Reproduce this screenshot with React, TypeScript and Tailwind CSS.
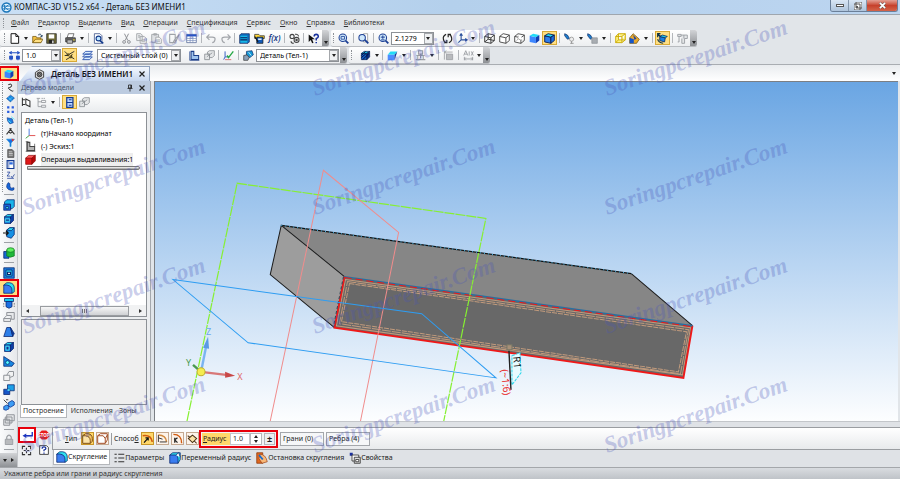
import React from 'react';
import { clsx } from 'clsx';

type GlyphName = keyof typeof glyphs;

interface ToolItem {
  kind?: 'button' | 'drop' | 'sep';
  icon?: GlyphName;
  label?: string;
  active?: boolean;
  disabled?: boolean;
  size?: 'sm' | 'lg';
}

const cube = (fill: string, top: string, side: string, stroke: string) => (
  <g stroke={stroke} strokeWidth="1" strokeLinejoin="round">
    <path d="M2 5h8v9H2z" fill={fill} />
    <path d="M2 5l4-3h8l-4 3z" fill={top} />
    <path d="M10 5l4-3v8l-4 4z" fill={side} />
  </g>
);

const block = (hole: string) => (
  <>
    {cube('#1687e0', '#28d8f4', '#0b3ea8', '#08246e')}
    <path d={hole} fill="#0d2f96" stroke="#5ff" strokeWidth="1" />
  </>
);

const glyphs = {
  logo: (
    <g fill="none" stroke="#1673b8" strokeWidth="2">
      <circle cx="8" cy="8" r="6.5" fill="#e8f6ff" />
      <path d="M5 4v8M11 4L6 8l5 4M3 6h10M3 10h10" strokeWidth="1.3" />
    </g>
  ),
  file: <path d="M3 1h7l4 4v10H3zM10 1v4h4" fill="#fff" stroke="#111" strokeWidth="1.4" />,
  open: (
    <g stroke="#6b4a00">
      <path d="M1 14V5h5l1 2h6v7z" fill="#f5c443" />
      <path d="M1 14l4-5h11l-3 5z" fill="#ffe083" />
      <path d="M9 3c3-3 5 0 5 2M12 4l2 2 1-3" fill="none" stroke="#135" strokeWidth="1.3" />
    </g>
  ),
  save: (
    <>
      <path d="M1 1h14v14H1z" fill="#6f6a35" stroke="#222" />
      <path d="M4 2h8v6H4z" fill="#fff" />
      <path d="M4 10h8v5H4z" fill="#222" />
      <path d="M9 11h2v4H9z" fill="#eee" />
    </>
  ),
  print: (
    <>
      <path d="M5 1h8l-2 6H3z" fill="#fff" stroke="#444" />
      <path d="M1 7h14v6H1z" fill="#6e6e6e" stroke="#222" />
      <path d="M3 10h8v5H3z" fill="#bbb" stroke="#333" />
      <path d="M12 9h2v2h-2z" fill="#e8d21a" />
    </>
  ),
  preview: (
    <>
      <path d="M2 1h8l3 3v11H2z" fill="#fff" stroke="#213a78" />
      <circle cx="8" cy="8" r="3.5" fill="#bfe6ff" stroke="#123a8c" strokeWidth="1.6" />
      <path d="M10 11l5 4" stroke="#123a8c" strokeWidth="2.2" />
    </>
  ),
  cut: (
    <g fill="none" stroke="#8d8f94" strokeWidth="1.4">
      <path d="M5 1l5 10M11 1L6 11" />
      <circle cx="4.5" cy="13" r="2" />
      <circle cx="11.5" cy="13" r="2" />
    </g>
  ),
  copy: (
    <g fill="#eef0f2" stroke="#a3a6aa" strokeWidth="1.3">
      <path d="M1 1h6l2 2v8H1zM6 5h6l3 3v7H6z" />
      <path d="M3 4h3M3 6h3M8 10h5M8 12h5" />
    </g>
  ),
  paste: (
    <g fill="#dfe1e4" stroke="#a3a6aa" strokeWidth="1.3">
      <path d="M1 2h10v12H1zM4 1h4v2H4z" />
      <path d="M7 6h5l3 3v6H7z" fill="#f5f6f7" />
      <path d="M9 10h4M9 12h4" />
    </g>
  ),
  brush: (
    <g fill="none" stroke="#9ea2a8" strokeWidth="1.5">
      <path d="M1 2h8v12H1zM15 2L8 10l-2 4 4-2z" />
    </g>
  ),
  table: (
    <>
      <path d="M1 2h14v12H1z" fill="#fff" stroke="#445a8e" />
      <path d="M1 2h14v3H1z" fill="#2354c8" />
      <path d="M1 8h14M1 11h14M6 5v9M10 5v9" stroke="#7b8fbc" />
    </>
  ),
  undo: <path d="M5 2L1 6l4 4M1 6h8q5 0 4 4t-4 4" fill="none" stroke="#a3a6ab" strokeWidth="1.8" />,
  redo: <path d="M11 2l4 4-4 4M15 6H7Q2 6 3 10t4 4" fill="none" stroke="#a3a6ab" strokeWidth="1.8" />,
  manager: (
    <>
      <path d="M1 3l2-2h12v12l-2 2H1z" fill="#0f6fc0" stroke="#0a1e5c" />
      <path d="M2 4h10v10H2z" fill="#17b7e6" />
      <path d="M2 7h10M2 10h10" stroke="#0a1e5c" strokeWidth="1.5" />
    </>
  ),
  library: (
    <>
      <path d="M1 2h6l2 2h6v4H1z" fill="#ffd83a" stroke="#222" />
      <path d="M4 6h9v9H4z" fill="#135bb8" stroke="#111" />
      <path d="M6 8h5v2H6z" fill="#fff" />
      <path d="M1 5l5 8" stroke="#111" strokeWidth="1.6" />
    </>
  ),
  gears: (
    <g fill="none" stroke="#444" strokeWidth="1.6">
      <circle cx="4.5" cy="5" r="3" />
      <circle cx="11" cy="10" r="3.6" />
      <circle cx="11" cy="10" r="1" />
      <path d="M3 12q0 3 4 3M9 2q4-1 5 3" />
    </g>
  ),
  help: (
    <>
      <path d="M1 2v11l3-3 2 5 2-1-2-5h4z" fill="#111" />
      <path d="M9 5q0-3 3-3t3 3q0 2-3 3v3M12 13v2" fill="none" stroke="#17309c" strokeWidth="2.2" />
    </>
  ),
  zoomBox: (
    <g fill="none" stroke="#1c3f94">
      <circle cx="7" cy="7" r="5.5" fill="#cfe8fb" strokeWidth="1.5" />
      <path d="M4.5 5h5v4h-5z" strokeWidth="1.2" />
      <path d="M11 11l4 4" strokeWidth="2.6" />
    </g>
  ),
  zoomPage: (
    <g fill="none" stroke="#1c3f94">
      <path d="M8 1h6v12H8z" stroke="#888" fill="#fff" />
      <circle cx="6" cy="7" r="4.7" fill="#cfe8fb" strokeWidth="1.5" />
      <path d="M10 10l5 5" strokeWidth="2.6" />
    </g>
  ),
  zoomIn: (
    <g fill="none" stroke="#1c3f94">
      <circle cx="7" cy="7" r="5.5" fill="#cfe8fb" strokeWidth="1.5" />
      <path d="M4 6h6M7 3.5v5M4.5 10h5" strokeWidth="1.4" />
      <path d="M11 11l4 4" strokeWidth="2.6" />
    </g>
  ),
  refresh: (
    <g fill="none" stroke="#222" strokeWidth="1.7">
      <path d="M6 2Q1 4 2 9t4 5M3 14h4v-4M10 14q5-2 4-7t-4-5M13 2H9v4" />
    </g>
  ),
  axes: (
    <g fill="none" stroke="#2a4f9c" strokeWidth="1.6">
      <path d="M6 2v8l-4 4M6 10h8M4 4l2-3 2 3M12 8l3 2-3 2" />
    </g>
  ),
  wire: (
    <g fill="none" stroke="#222" strokeWidth="1.2">
      <path d="M1 5l5-4 9 2v8l-5 4-9-2zM1 5l9 2v8M10 7l5-4M6 1v8l9 2M6 9l-5 4" />
    </g>
  ),
  hidden: (
    <g fill="#fff" stroke="#333" strokeWidth="1.2">
      <path d="M1 5l5-4 9 2v8l-5 4-9-2zM1 5l9 2v8M10 7l5-4" />
    </g>
  ),
  thin: (
    <g fill="#fff" stroke="#333" strokeWidth="1.2">
      <path d="M1 5l5-4 9 2v8l-5 4-9-2zM1 5l9 2v8M10 7l5-4" />
      <path d="M6 1v8l9 2M6 9l-5 4" stroke="#999" strokeDasharray="2 1" />
    </g>
  ),
  solid: (
    <>
      <path d="M1 4l9 2v9l-9-2z" fill="#3c86ff" />
      <path d="M1 4l5-3 9 2-5 3z" fill="#22dcf7" />
      <path d="M10 6l5-3v8l-5 4z" fill="#103fb4" />
    </>
  ),
  solidEdge: (
    <g stroke="#0a1a50" strokeWidth="1.3">
      <path d="M1 4l9 2v9l-9-2z" fill="#2f7dea" />
      <path d="M1 4l5-3 9 2-5 3z" fill="#22dcf7" />
      <path d="M10 6l5-3v8l-5 4z" fill="#1b6fe0" />
    </g>
  ),
  lamp: (
    <>
      <path d="M1 1l4 2 3 5-3 1-4-5z" fill="#1c7fd0" stroke="#0a2a66" />
      <circle cx="11" cy="9" r="3" fill="#eee" stroke="#888" />
      <path d="M11 12v3M9 15h5" stroke="#777" />
    </>
  ),
  lampGray: (
    <>
      <path d="M1 1l4 2 3 5-3 1-4-5z" fill="#1c7fd0" stroke="#0a2a66" />
      <path d="M7 7h8v8H7z" fill="#a9adb2" stroke="#8b8f94" />
    </>
  ),
  yellowCube: (
    <g fill="#fff27a" stroke="#c9a800" strokeWidth="1.3">
      <path d="M1 5h9v9H1zM1 5l4-4h10l-5 4M15 1v9l-5 4M5 1v9h10M5 10l-4 4" />
    </g>
  ),
  section: (
    <>
      <path d="M1 15V7l5-6 9 8-4 6z" fill="#e9a92c" stroke="#6b4a00" />
      <path d="M1 15V7l6 2v6z" fill="#1656c8" />
      <path d="M6 3l5 5-3 2z" fill="#2244a0" />
    </>
  ),
  orient: (
    <>
      <path d="M4 5l8 2-1 6-7-2z" fill="#1c7fe0" stroke="#0a2a66" strokeWidth="1.2" />
      <path d="M4 5l4-2 7 2-3 2z" fill="#22dcf7" stroke="#0a2a66" strokeWidth="1.2" />
      <path d="M1 6V1h4M2 2l3 3" fill="none" stroke="#134" strokeWidth="1.8" />
      <path d="M1 9q1 5 8 6" fill="none" stroke="#134" strokeWidth="1.6" />
    </>
  ),
  panelGray: (
    <g fill="#e4e6e8" stroke="#9a9da2" strokeWidth="1.3">
      <path d="M1 2h5v3H1zM3 5v8H1M6 3h9v5h-4v7H7V8M10 3v5" />
    </g>
  ),
  treeGray: (
    <g fill="none" stroke="#9a9da2" strokeWidth="1.3">
      <path d="M1 2h5M3 2v12h5M3 7h5M8 5h6v3H8zM8 12h6v3H8z" />
      <path d="M8 2h6" strokeDasharray="2 1" />
    </g>
  ),
  step: (
    <g stroke="#2350c4" strokeWidth="1.5" fill="none">
      <path d="M1 4h14M4 2L1 4l3 2M12 2l3 2-3 2M3 8v7M13 8v7" />
      <path d="M1 9h4v4H1zM11 9h4v4h-4z" fill="#2350c4" />
    </g>
  ),
  snap: (
    <g fill="none" stroke="#222" strokeWidth="1.3">
      <path d="M1 2l5 5 9-5M1 8h5M3 14l7-4 5 3M12 6l-2 4" />
      <circle cx="6" cy="7" r="1.5" fill="#e0b000" />
      <circle cx="10" cy="10" r="1.5" fill="#e0b000" />
    </g>
  ),
  layers: (
    <g stroke="#1f49a8" strokeWidth="1.2" fill="#d9ecff">
      <path d="M1 14l4-4h10l-4 4zM1 10l4-4h10l-4 4zM1 6l4-4h10l-4 4z" />
    </g>
  ),
  sketch: (
    <>
      <path d="M3 2h4v6h7v6H3z" fill="#9fc4ee" stroke="#1b3d87" strokeWidth="1.5" />
      <path d="M1 2v13M1 15h14" stroke="#1b3d87" />
    </>
  ),
  sketchGray: (
    <>
      <path d="M3 2h4v6h7v6H3z" fill="#b5b5b5" stroke="#444" strokeWidth="1.5" />
      <path d="M1 1h4M1 15h14M3 1v14M14 8V4" stroke="#444" />
    </>
  ),
  boxes: (
    <g fill="#e4e6e8" stroke="#8b8f94" strokeWidth="1.2">
      <path d="M1 6h7v8H1zM5 3l3-2h7v7l-3 3H8V6H5z" />
      <path d="M4 10l8-6" />
    </g>
  ),
  check: (
    <>
      <path d="M3 2v8l-2 4M3 10h6" fill="none" stroke="#345dc4" strokeWidth="1.4" />
      <path d="M6 8l2 3 7-9" fill="none" stroke="#27a845" strokeWidth="2" />
      <path d="M3 14h9" stroke="#d04040" />
    </>
  ),
  parts: (
    <>
      <path d="M5 2l8-1 2 6-5 4-5-3z" fill="#159ad8" stroke="#0a2a66" />
      <path d="M1 8l5-1 3 4-2 4H1z" fill="#8aa0b8" stroke="#333" />
      <path d="M8 3l4 5" stroke="#fff" />
    </>
  ),
  hatch: (
    <>
      {cube('#135fc4', '#19c8ee', '#0b2f86', '#031a50')}
      <path d="M2 11l7-6M4 14l9-9M2 8l6-6" stroke="#031040" strokeWidth="1.4" />
    </>
  ),
  wedge: (
    <>
      <path d="M1 7l4-5h10l-4 5z" fill="#22dcf7" />
      <path d="M1 7h10v8H1z" fill="#4d8dff" />
      <path d="M11 7l4-5-4 13z" fill="#123a9f" />
    </>
  ),
  viseGray: (
    <g fill="none" stroke="#9b9ea3" strokeWidth="1.5">
      <path d="M5 1h6v5H5zM2 8h12M4 8v5M12 8v5M1 14h14M8 6v6" />
    </g>
  ),
  dimGray: (
    <g fill="#b8babd" stroke="#9b9ea3" strokeWidth="1.2">
      <path d="M5 6h9v8H5z" />
      <path d="M2 2v12M2 3h12M5 1L2 3l3 2" fill="none" />
    </g>
  ),
  dimAuto: (
    <g fill="none" stroke="#9b9ea3" strokeWidth="1.3">
      <path d="M1 8l3-7 3 7M2 6h4M9 2v6M12 2l3 6M15 2l-3 6M2 10v5M14 10v5M2 13h12M4 11l-2 2 2 2M12 11l2 2-2 2" />
    </g>
  ),
  spline: <path d="M4 3q6-3 6 1T6 8t1 4 6 2" fill="none" stroke="#222" strokeWidth="1.7" />,
  surface: (
    <>
      <path d="M1 8l7-6 7 5-7 7z" fill="#178be0" stroke="#0b3a94" />
      <path d="M4 6l7 6M5 11l7-6" stroke="#6cf" />
    </>
  ),
  array: (
    <g fill="#2a5ee0">
      <path d="M2 2h4v4H2zM10 2h4v4h-4zM2 10h4v4H2zM10 10h4v4h-4z" />
    </g>
  ),
  aux: (
    <>
      <path d="M2 3l9 2 2 7-6 2-4-5z" fill="#1c7fe0" stroke="#0a2f8a" />
      <path d="M9 1l6 5M4 8l5 4" stroke="#5ef" strokeWidth="1.5" />
    </>
  ),
  measure: (
    <g fill="none" stroke="#333" strokeWidth="1.9">
      <path d="M1 13l7-9 7 9M5 9l3 2 3-2" />
      <path d="M6 3h4" />
    </g>
  ),
  filter: (
    <>
      <path d="M1 2h14L9 9v6H7V9z" fill="#1a6fe0" stroke="#0f8fd8" />
      <path d="M10 1l5 2-4 3z" fill="#e03030" />
    </>
  ),
  spec: (
    <>
      <path d="M3 1h8l3 3v11H3z" fill="#777" stroke="#333" />
      <path d="M5 5h6M5 8h7M5 11h7" stroke="#ddd" strokeWidth="1.3" />
    </>
  ),
  report: (
    <>
      <path d="M2 1h12v14H2z" fill="#fff" stroke="#123a94" strokeWidth="2" />
      <path d="M6 4h6v4H6z" fill="#2b6be0" />
      <path d="M5 1v14" stroke="#123a94" />
    </>
  ),
  marks: (
    <g fill="none" stroke="#1e3f9a" strokeWidth="1.4">
      <path d="M2 2h5L2 9h5M2 13h12M9 9l2 3 4-6" />
    </g>
  ),
  sheet: <path d="M4 1q-3 3-3 8 2 6 10 6 5-1 3-5l-5 1q-3-3-2-8z" fill="#1867d8" stroke="#0a2a7a" />,
  extrude: (
    <>
      <path d="M2 4l3-3h10v9l-3 3h-2V7H2z" fill="#19b4ea" stroke="#08246e" />
      <path d="M1 7h9v8H1z" fill="#1a62d8" stroke="#08246e" />
      <path d="M4 10h3v3H4z" fill="#5ff" stroke="#08246e" />
    </>
  ),
  cutExtrude: block('M3 8h6v3H3z'),
  addExtrude: (
    <>
      <path d="M5 4l4-3h6v9l-4 5-6-2z" fill="#1690e4" stroke="#08246e" />
      <path d="M5 4l4-3h6l-4 4z" fill="#28d8f4" stroke="#08246e" />
      <path d="M0 8h7M4 5l3 3-3 3" stroke="#111" fill="none" strokeWidth="1.6" />
    </>
  ),
  cylinders: (
    <>
      <path d="M1 6h7v9H1z" fill="#1669d0" stroke="#08246e" />
      <path d="M5 4v8q5 3 10 0V4q-5 4-10 0" fill="#1eb83a" stroke="#117a22" />
      <ellipse cx="10" cy="4" rx="5" ry="3" fill="#5df05d" stroke="#117a22" />
    </>
  ),
  hole: (
    <>
      <path d="M1 1h14v14H1z" fill="#1778d8" stroke="#08246e" />
      <path d="M4 4h8v8H4z" fill="#29d4f4" stroke="#08246e" />
      <path d="M6 7h4v3H6z" fill="#fff" stroke="#08246e" strokeWidth="1.6" />
    </>
  ),
  fillet: (
    <>
      <path d="M1 4l4-3h4q6 1 6 7v5l-3 2z" fill="#2de0f0" stroke="#08246e" />
      <path d="M1 4h4q7 1 7 7v4H1z" fill="#3a7df0" stroke="#08246e" />
    </>
  ),
  thread: (
    <>
      <path d="M2 2h12v4H2z" fill="#15c8f0" stroke="#08246e" />
      <path d="M4 6h8v7l-4 2-4-2z" fill="#1b6fe0" stroke="#08246e" />
      <path d="M1 8v5M15 8v5" stroke="#333" strokeDasharray="1 1" />
    </>
  ),
  shellGray: (
    <g fill="#e6e8ea" stroke="#8f9398" strokeWidth="1.3">
      <path d="M1 10h9v4H1zM5 2h10v9h-4V6H5zM1 10l4-4" />
    </g>
  ),
  draft: (
    <>
      <path d="M5 2h5l3 12H1z" fill="#2d7fe8" stroke="#08246e" />
      <path d="M10 2l5 8-2 4z" fill="#0b3ea8" stroke="#08246e" />
    </>
  ),
  shell: block('M4 7h4v5H4z'),
  rib: (
    <>
      <path d="M1 2l14 9-3 4H1z" fill="#1785e0" stroke="#08246e" />
      <circle cx="6" cy="10" r="2.5" fill="#5ff" stroke="#08246e" />
    </>
  ),
  scaleGray: (
    <g fill="#f1f2f3" stroke="#8f9398" strokeWidth="1.3">
      <path d="M1 7h8v7H1zM8 2h6v6l-5 2M5 7l3-5" />
    </g>
  ),
  booleanOp: (
    <>
      <path d="M6 1h9v8H6z" fill="#1c9fe8" stroke="#08246e" />
      <path d="M1 7h8v7H1z" fill="#1556c8" stroke="#08246e" />
      <path d="M6 7h3v2H6z" fill="#6ff" />
    </>
  ),
  arrayCopy: (
    <>
      <path d="M7 5l5-3 3 2v4l-5 3-3-2zM1 10l4-2 3 2v3l-4 2-3-1z" fill="#3d9df5" stroke="#0a2f8a" />
      <path d="M1 1l5 5M4 1V1h3" stroke="#111" fill="none" />
    </>
  ),
  mirrorGray: (
    <g fill="#e6e8ea" stroke="#8f9398" strokeWidth="1.3">
      <path d="M5 1h10v8H5zM3 4h9v8H3zM1 7h8v8H1z" />
    </g>
  ),
  lock: (
    <>
      <path d="M5 7V4q3-5 6 0v3" fill="none" stroke="#9b9ea3" strokeWidth="1.6" />
      <path d="M3 7h10v7H3z" fill="#b8babd" stroke="#8f9398" />
    </>
  ),
  part: (
    <g fill="none" stroke="#333" strokeWidth="1.3">
      <path d="M2 5l6-4 6 3v8l-6 3-6-3z" fill="#ddd" />
      <circle cx="8" cy="8" r="3.5" fill="#777" />
      <circle cx="8" cy="8" r="1.2" fill="#fff" />
    </g>
  ),
  hier: (
    <g fill="#fff" stroke="#333" strokeWidth="1.5">
      <path d="M2 1v12M2 4h4M2 11h4" />
      <path d="M7 3l6 3v8l-6-3z" />
    </g>
  ),
  relations: (
    <>
      <path d="M4 1h9v14H4z" fill="#bcd6ff" stroke="#123a94" strokeWidth="1.8" />
      <path d="M4 8h9M7 4h4M7 12h4" stroke="#123a94" strokeWidth="1.5" />
    </>
  ),
  origin: (
    <g fill="none" strokeWidth="1.4">
      <path d="M6 1v10" stroke="#4a7ae0" />
      <path d="M6 11h9" stroke="#e05050" />
      <path d="M6 11l-5 4" stroke="#40a040" />
    </g>
  ),
  operation: (
    <g stroke="#8c0000">
      <path d="M1 6h9v9H1z" fill="#e01818" />
      <path d="M1 6l4-4h10l-5 4z" fill="#ff5b5b" />
      <path d="M10 6l5-4v8l-5 5z" fill="#b80808" />
    </g>
  ),
  pin: (
    <g fill="none" stroke="#222" strokeWidth="1.6">
      <path d="M5 2h6v6H5zM3 9h10M8 9v6" />
      <path d="M10 2v6" strokeWidth="2.2" />
    </g>
  ),
  close: <path d="M3 3l10 10M13 3L3 13" stroke="#222" strokeWidth="2.4" />,
  enter: (
    <>
      <path d="M15 4v5H6" fill="none" stroke="#1b35c0" strokeWidth="1.8" />
      <path d="M7 6v6L2 9z" fill="#1b35c0" />
    </>
  ),
  fourWay: (
    <g fill="none" stroke="#333" strokeWidth="1.5">
      <path d="M2 6V2h4M10 2h4v4M14 10v4h-4M6 14H2v-4M8 4v3M8 9v3M4 8h3M9 8h3" />
    </g>
  ),
  helpBox: (
    <>
      <path d="M1 1h11l3 3v11H1z" fill="#fff" stroke="#333" strokeWidth="1.4" />
      <path d="M5 6q0-3 3-3t3 3q0 1-3 2v2M8 12v2" fill="none" stroke="#17309c" strokeWidth="2" />
    </>
  ),
  roundEdge: (
    <g fill="#f9c766" stroke="#7b4a12" strokeWidth="1.4">
      <path d="M1 4l4-3h4q6 1 6 7v4l-3 3z" />
      <path d="M1 4h4q7 1 7 7v4H1z" fill="#fbe3a8" />
    </g>
  ),
  chamferEdge: (
    <g fill="#fff" stroke="#a04a20" strokeWidth="1.4">
      <path d="M1 4l4-3h10v9l-3 5H1z" />
      <path d="M1 4h8l3 4v7M12 8l3-5" fill="none" />
    </g>
  ),
  arcA: (
    <g fill="none" strokeWidth="1.8">
      <path d="M1 4q12-2 14 9" stroke="#d05a10" strokeWidth="2.4" />
      <path d="M3 14l6-7M5 7h4v4" stroke="#111" />
    </g>
  ),
  arcB: (
    <g fill="none" strokeWidth="1.8">
      <path d="M2 3q11 0 12 10" stroke="#d08a40" strokeWidth="2.2" />
      <path d="M2 3v10M2 7l6 2M4 13h10" stroke="#333" strokeWidth="1.4" />
    </g>
  ),
  arcC: (
    <g fill="none" strokeWidth="1.8">
      <path d="M2 2q12 0 12 13" stroke="#d05a10" strokeWidth="2" />
      <path d="M4 7v7M8 7l-4 3 4 4" stroke="#222" />
    </g>
  ),
  chord: (
    <g fill="#fbe3a8" stroke="#4a3418" strokeWidth="1.5">
      <path d="M2 8l6-5 6 5-6 6zM1 4l3 2M11 12l3 3" />
    </g>
  ),
  params: (
    <g stroke="#333" strokeWidth="1.6">
      <path d="M2 3h3M7 3h8M2 8h3M7 8h8M2 13h3M7 13h8" />
    </g>
  ),
  variable: (
    <>
      <path d="M1 4l4-3h10v9l-3 5z" fill="#2de0f0" stroke="#08246e" />
      <path d="M1 4h8q3 2 3 5v6H1z" fill="#3a7df0" stroke="#08246e" />
      <path d="M9 4l4-3 2 6" fill="#fff" stroke="#08246e" />
    </>
  ),
  stopRound: (
    <>
      <path d="M1 1h8v14H1z" fill="#e06820" stroke="#8a3608" />
      <path d="M5 3q8 0 10 10l-7 2-4-6z" fill="#f8b878" stroke="#a04a20" />
      <path d="M4 4l5 6" stroke="#146ad0" strokeWidth="2.4" />
    </>
  ),
  props: (
    <>
      <path d="M1 1h4v4H1z" fill="#1b2f9c" />
      <path d="M4 4h9v8H4z" fill="#fff" stroke="#222" />
      <path d="M7 7h8v8H7z" fill="#ddd" stroke="#222" />
      <path d="M9 10h4v3H9z" stroke="#222" fill="#fff" />
    </>
  ),
};

const Glyph = ({ name, className = 'size-3' }: { name: GlyphName; className?: string }) => (
  <svg viewBox="0 0 16 16" className={clsx('shrink-0', className)} aria-hidden="true">
    {glyphs[name]}
  </svg>
);

const Arrow = ({ className = 'border-t-[#222]' }: { className?: string }) => (
  <span className={clsx('block h-0 w-0 border-x-2 border-t-3 border-x-transparent', className)} />
);

const sep: ToolItem = { kind: 'sep' };
const drop: ToolItem = { kind: 'drop' };

const standardTools: ToolItem[] = [
  { icon: 'file', label: 'Создать' },
  drop,
  { icon: 'open', label: 'Открыть', size: 'sm' },
  { icon: 'save', label: 'Сохранить', size: 'sm' },
  sep,
  { icon: 'print', label: 'Печать' },
  drop,
  sep,
  { icon: 'preview', label: 'Предварительный просмотр' },
  drop,
  sep,
  { icon: 'cut', label: 'Вырезать', disabled: true },
  { icon: 'copy', label: 'Копировать', disabled: true },
  { icon: 'paste', label: 'Вставить', disabled: true },
  { icon: 'brush', label: 'Копировать свойства', disabled: true, size: 'lg' },
  { icon: 'table', label: 'Свойства' },
  sep,
  { icon: 'undo', label: 'Отменить', disabled: true, size: 'sm' },
  { icon: 'redo', label: 'Повторить', disabled: true, size: 'sm' },
  sep,
  { icon: 'manager', label: 'Менеджер библиотек' },
  { icon: 'library', label: 'Менеджер документа' },
];

const viewTools: ToolItem[] = [
  { icon: 'refresh', label: 'Обновить изображение' },
  { icon: 'axes', label: 'Ориентация' },
  drop,
  sep,
  { icon: 'wire', label: 'Каркас' },
  { icon: 'hidden', label: 'Без невидимых линий' },
  { icon: 'thin', label: 'Невидимые линии тонкие' },
  { icon: 'solid', label: 'Полутоновое' },
  { icon: 'solidEdge', label: 'Полутоновое с каркасом', active: true },
  sep,
  { icon: 'lamp', label: 'Скрыть объекты' },
  drop,
  { icon: 'lampGray', label: 'Скрыть эскизы' },
  drop,
  sep,
  { icon: 'yellowCube', label: 'Упрощения', size: 'sm' },
  { icon: 'section', label: 'Сечение модели' },
  drop,
  sep,
  { icon: 'orient', label: 'Перестроить', active: true },
  sep,
  { icon: 'panelGray', label: 'Дерево', disabled: true },
];

const hatchTools: ToolItem[] = [
  { icon: 'hatch', label: 'Грани' },
  drop,
  sep,
  { icon: 'wedge', label: 'Плоскости' },
  drop,
  sep,
  { icon: 'viseGray', label: 'Сопряжения', disabled: true },
  drop,
  sep,
  { icon: 'dimGray', label: 'Эскизы', disabled: true },
  sep,
  { icon: 'dimAuto', label: 'Авторазмер', disabled: true },
  drop,
];

const modeTools: GlyphName[] = ['spline', 'surface', 'array', 'aux', 'measure', 'filter', 'spec', 'report', 'marks', 'sheet'];
const extrudeTools: GlyphName[] = ['extrude', 'cutExtrude', 'addExtrude'];
const featureTools: GlyphName[] = [
  'hole', 'fillet', 'thread', 'shellGray', 'draft', 'shell', 'rib', 'scaleGray', 'booleanOp', 'arrayCopy', 'mirrorGray',
];

function Tools({ items }: { items: ToolItem[] }) {
  return (
    <>
      {items.map((item, i) => {
        if (item.kind === 'sep') return <span key={i} className="mx-[2px] h-2.5 w-px bg-[#b4b7bb]" />;
        if (item.kind === 'drop') {
          return (
            <button key={i} aria-label="Список" className="flex h-3.5 w-2 items-center justify-center">
              <Arrow />
            </button>
          );
        }
        return (
          <button
            key={i}
            title={item.label}
            disabled={item.disabled}
            className={clsx(
              'flex h-3.5 shrink-0 items-center justify-center',
              item.size === 'sm' ? 'w-3.5' : item.size === 'lg' ? 'w-5' : 'w-[15px]',
              item.active && 'border border-[#d8a938] bg-[#ffdf82]'
            )}
          >
            <Glyph name={item.icon!} className="size-[11px]" />
          </button>
        );
      })}
    </>
  );
}

const Grip = () => <span className="mx-[2px] h-2.5 w-px border-l border-dotted border-[#8d9196]" />;

const GripEnd = () => (
  <span className="ml-auto flex w-[7px] items-end justify-center self-stretch rounded-r-xs bg-gradient-to-b from-[#d2d4d7] to-[#8e9195] pb-[2px]">
    <Arrow />
  </span>
);

function Bar({ className, children }: { className?: string; children: React.ReactNode }) {
  return (
    <div
      role="toolbar"
      className={clsx('flex h-[17px] items-center rounded-xs border-b border-[#b9bcc0] bg-gradient-to-b from-white to-[#eceef0]', className)}
    >
      {children}
    </div>
  );
}

function Combo({ label, value, className }: { label: string; value: string; className: string }) {
  return (
    <div className={clsx('flex h-[13px] items-stretch border border-[#8d9196] bg-white', className)}>
      <select aria-label={label} defaultValue={value} className="min-w-0 flex-1 appearance-none pl-[3px] text-[7px] leading-[11px] text-black">
        <option>{value}</option>
      </select>
      <span className="flex w-[9px] items-center justify-center border border-[#a4a7ab] bg-[#eef0f2]">
        <Arrow />
      </span>
    </div>
  );
}

function Header() {
  const menu = ['Файл', 'Редактор', 'Выделить', 'Вид', 'Операции', 'Спецификация', 'Сервис', 'Окно', 'Справка', 'Библиотеки'];
  return (
    <header>
      <div className="flex h-[14px] items-center bg-gradient-to-r from-[#c9dff5] via-[#b4d0ec] to-[#bcd5f0]">
        <Glyph name="logo" className="ml-px size-[11px]" />
        <h1 className="ml-[2px] text-[8px] leading-[12px] whitespace-pre text-[#111]">
          КОМПАС-3D V15.2 x64 - Деталь БЕЗ ИМЕНИ1
        </h1>
        <div className="mr-[2px] ml-auto flex h-3 self-start overflow-hidden rounded-b-[3px] border border-t-0 border-[#6a7f99]">
          <button aria-label="Свернуть" className="flex w-[18px] items-center justify-center border-r border-[#8497ad] bg-gradient-to-b from-[#d9e6f4] to-[#aec4dc]">
            <span className="h-[3px] w-2 border border-[#555] bg-white" />
          </button>
          <button aria-label="Развернуть" className="flex w-[18px] items-center justify-center border-r border-[#8497ad] bg-gradient-to-b from-[#d9e6f4] to-[#aec4dc]">
            <svg viewBox="0 0 8 8" className="size-2">
              <path d="M2 0h6v6H2zM0 2h6v6H0z" fill="#fff" stroke="#555" />
              <path d="M2 4h2v2H2z" fill="#555" />
            </svg>
          </button>
          <button aria-label="Закрыть" className="flex w-[30px] items-center justify-center bg-gradient-to-b from-[#e3a095] via-[#c6412c] to-[#d4644a]">
            <svg viewBox="0 0 8 8" className="size-[7px]">
              <path d="M1 1l6 6M7 1L1 7" stroke="#555" strokeWidth="3" />
              <path d="M1 1l6 6M7 1L1 7" stroke="#fff" strokeWidth="2" />
            </svg>
          </button>
        </div>
      </div>
      <nav className="flex h-4 items-center gap-[9px] border-t border-[#9fa6ae] bg-[#e1e5e9] pl-[3px] text-[7px] leading-[12px] text-[#333]">
        <span className="-mr-[2px] h-2.5 w-px border-l border-dotted border-[#8d9196]" />
        {menu.map((name) => (
          <button key={name} className="first-letter:underline">{name}</button>
        ))}
      </nav>
      <div className="flex gap-[2px] bg-[#e1e5e9]">
        <Bar className="w-[329px]">
          <span className="w-[2px]" />
          <Grip />
          <Tools items={standardTools} />
          <button title="Переменные" className="w-[15px] text-[8px] leading-[12px] font-semibold text-[#1b3d87] italic">f(x)</button>
          <Tools items={[sep, { icon: 'gears', label: 'Настройка', size: 'sm' }, sep, { icon: 'help', label: 'Справка' }]} />
          <GripEnd />
        </Bar>
        <Bar className="w-[366px]">
          <Grip />
          <Tools
            items={[
              { icon: 'zoomBox', label: 'Увеличить рамкой' },
              sep,
              { icon: 'zoomPage', label: 'Показать всё' },
              sep,
              { icon: 'zoomIn', label: 'Масштаб' },
            ]}
          />
          <Combo label="Масштаб" value="2.1279" className="mr-1.5 w-[43px]" />
          <Tools items={viewTools} />
          <GripEnd />
        </Bar>
      </div>
      <div className="flex gap-[2px] bg-[#e1e5e9]">
        <Bar className="w-[347px]">
          <span className="w-[2px]" />
          <Grip />
          <Tools items={[{ icon: 'step', label: 'Шаг курсора' }]} />
          <Combo label="Шаг" value="1.0" className="w-[39px]" />
          <span className="w-px" />
          <Tools items={[{ icon: 'snap', label: 'Привязки', active: true }, { icon: 'layers', label: 'Слои', size: 'lg' }]} />
          <Combo label="Слой" value="Системный слой (0)" className="mr-1.5 w-[84px]" />
          <Tools
            items={[
              { icon: 'sketch', label: 'Эскиз' },
              { icon: 'boxes', label: 'Деталь', disabled: true, size: 'sm' },
              sep,
              { icon: 'check', label: 'Проверка' },
              sep,
              { icon: 'parts', label: 'Тела' },
            ]}
          />
          <Combo label="Тело" value="Деталь (Тел-1)" className="w-[83px]" />
          <GripEnd />
        </Bar>
        <Bar className="w-[141px]">
          <Grip />
          <span className="w-1" />
          <Tools items={hatchTools} />
          <GripEnd />
        </Bar>
      </div>
    </header>
  );
}

const RailDivider = () => <span className="mx-auto my-[2px] h-[2px] w-2.5 border-t border-[#9da1a6]" />;

const RailButton = ({ name, className }: { name: GlyphName; className: string }) => (
  <button aria-label={name} className={clsx('flex items-center justify-center', className)}>
    <Glyph name={name} />
  </button>
);

function Rail() {
  return (
    <aside className="flex w-[18px] shrink-0 flex-col border-r border-[#c3c6ca] bg-gradient-to-r from-[#fafbfc] to-[#e6e8eb]">
      <button aria-label="Редактирование детали" className="relative my-[3px] ml-px flex h-[11px] items-center justify-center bg-[#ffdf82] outline-2 outline-red-600">
        <Glyph name="solid" className="size-[10px]" />
      </button>
      {modeTools.map((name) => (
        <button key={name} aria-label={name} className="ml-[2px] flex h-[11px] items-center justify-center border-l border-dotted border-[#8d9196]">
          <Glyph name={name} className="size-[9px]" />
        </button>
      ))}
      <RailDivider />
      {extrudeTools.map((name) => <RailButton key={name} name={name} className="h-3.5" />)}
      <RailDivider />
      <RailButton name="cylinders" className="h-3.5" />
      <RailDivider />
      {featureTools.map((name) => (
        <RailButton
          key={name}
          name={name}
          className={clsx('min-h-0 flex-1', name === 'fillet' && 'relative bg-[#ffdf82] outline-2 outline-red-600')}
        />
      ))}
      <RailDivider />
      <RailButton name="lock" className="h-3.5" />
      <RailDivider />
      <div className="flex h-3.5 items-center justify-center gap-1 bg-gradient-to-b from-[#d2d4d7] to-[#8e9195]">
        <Arrow />
        <span className="h-0 w-0 border-y-2 border-l-3 border-y-transparent border-l-[#222]" />
      </div>
    </aside>
  );
}

function TreePanel() {
  const nodes: { icon: GlyphName; text: string }[] = [
    { icon: 'origin', text: '(т)Начало координат' },
    { icon: 'sketchGray', text: '(-) Эскиз:1' },
    { icon: 'operation', text: 'Операция выдавливания:1' },
  ];
  return (
    <section className="flex w-[133px] shrink-0 flex-col border-r border-[#a4a8ad] bg-[#eceef0]">
      <div className="flex h-[13px] items-center bg-[#bccbe0] pr-1 pl-[3px] text-[7px] leading-[12px] text-[#44536b]">
        <h2>Дерево модели</h2>
        <button aria-label="Закрепить" className="ml-auto"><Glyph name="pin" className="size-[8px]" /></button>
        <button aria-label="Закрыть панель" className="ml-1"><Glyph name="close" className="size-[8px]" /></button>
      </div>
      <div className="flex h-4 items-center bg-gradient-to-b from-white to-[#eceef0] pl-px">
        <Tools
          items={[
            { icon: 'hier', label: 'Структура' },
            { icon: 'treeGray', label: 'Состав', disabled: true },
            drop,
            sep,
            { icon: 'relations', label: 'Отношения', active: true },
            { icon: 'boxes', label: 'Дополнительно', disabled: true },
          ]}
        />
      </div>
      <div className="mx-[3px] mt-[2px] flex flex-1 flex-col border border-[#8d9196] bg-white">
        <div className="flex-1 pt-px text-[7px] leading-[13px] text-black">
          <p className="pl-[3px]">Деталь (Тел-1)</p>
          <ul>
            {nodes.map((node, i) => (
              <li key={node.text} className="flex items-center gap-[5px] pl-[3px] whitespace-nowrap">
                <Glyph name={node.icon} className="size-[11px]" />
                <span className={clsx(i === 2 && 'bg-[#eeeeee]')}>{node.text}</span>
              </li>
            ))}
          </ul>
          <div className="ml-[5px] h-1 w-[113px] rounded-r-full border border-[#777] bg-gradient-to-b from-white to-[#999]" />
        </div>
        <div className="flex h-[11px] items-center justify-between bg-[#f1f2f3] px-1">
          <span className="h-0 w-0 border-y-2 border-r-3 border-y-transparent border-r-[#333]" />
          <span className="flex h-[10px] w-[89px] items-center justify-center gap-px border border-[#999ca0] bg-gradient-to-b from-[#f7f7f7] to-[#cfd1d4]">
            <span className="h-1 w-px bg-[#777]" />
            <span className="h-1 w-px bg-[#777]" />
            <span className="h-1 w-px bg-[#777]" />
          </span>
          <span className="h-0 w-0 border-y-2 border-l-3 border-y-transparent border-l-[#333]" />
        </div>
      </div>
      <div className="mx-[3px] mt-[2px] h-[86px] border border-[#8d9196] bg-[#efefef]" />
      <div role="tablist" className="flex h-4 items-start gap-[2px] pl-[2px] text-[7px] leading-[12px] text-[#333]">
        <button role="tab" aria-selected="true" className="border border-t-0 border-[#b4b7bb] bg-white px-[2px]">Построение</button>
        <button role="tab" className="px-[2px]">Исполнения</button>
        <button role="tab" className="px-[2px]">Зоны</button>
      </div>
    </section>
  );
}

function Viewport() {
  return (
    <svg viewBox="155 82 743 338" preserveAspectRatio="xMidYMid slice" className="mr-[2px] ml-[3px] h-auto min-w-0 flex-1 border-t border-l border-[#7b7f84]">
      <defs>
        <linearGradient id="sky" x1="0" y1="0" x2="0" y2="1">
          <stop offset="0" stopColor="#69a5e3" />
          <stop offset="1" stopColor="#ffffff" />
        </linearGradient>
      </defs>
      <rect x="150" y="80" width="755" height="345" fill="url(#sky)" />

      {/* extruded body */}
      <path d="M282 225L345 276L335 327L271 274Z" fill="#9d9d9d" />
      <path d="M282 225L631 273L692 325L345 276Z" fill="#868686" />
      <path d="M345 276L692 325L683 377L335 327Z" fill="#686868" />
      <path d="M345 276L282 225L271 274L335 327M631 273L692 325" fill="none" stroke="#1c1c1c" />
      <path d="M282 225L631 273" stroke="#111" strokeWidth="1.2" />
      <path d="M282 225L631 273" stroke="#3fb4e8" strokeDasharray="1 3" />

      {/* fillet preview */}
      <g fill="none" stroke="#c09a7c" strokeWidth="1">
        <path d="M346 279L690 327L682 374L337 325Z" />
        <path d="M348 281L688 329L680 373L340 323Z" strokeDasharray="9 1" />
        <path d="M350 283L686 331L678 371L342 321Z" strokeDasharray="5 1" />
      </g>
      <path d="M692 325L683 377L335 327L345 276" fill="none" stroke="#f01818" strokeWidth="1.8" />
      <path d="M345 276L692 325" stroke="#2a6f9f" strokeWidth="1.4" />
      <path d="M345 277L692 326" stroke="#f01818" strokeDasharray="7 4" />
      <path d="M344 276L334 326" stroke="#345" strokeDasharray="3 2" />

      {/* base planes */}
      <g fill="none">
        <path d="M188 420L238 183L486 218L444 420" stroke="#86f032" strokeWidth="1.2" strokeDasharray="10 1" />
        <path d="M271 420L324 170L399 232L361 420" stroke="#f08c8c" />
        <path d="M174 279L422 313L496 377L249 342Z" stroke="#2e9df2" />
      </g>

      {/* coordinate triad */}
      <g strokeWidth="2.4">
        <path d="M202 371L207 346" stroke="#7ab4f0" />
        <path d="M204 347L209 336L210 348Z" fill="#5a9ae6" />
        <path d="M202 371L227 374" stroke="#d87878" />
        <path d="M226 371L236 375L226 377Z" fill="#c84848" />
        <path d="M202 371L194 364" stroke="#4a9a50" />
        <circle cx="202" cy="371" r="4" fill="#f4ec50" stroke="#c0b030" strokeWidth="1" />
      </g>
      <g fontSize="9">
        <text x="238" y="379" fill="#e06868">X</text>
        <text x="207" y="334" fill="#6aa6ee">Z</text>
        <text x="187" y="365" fill="#4a9a50">Y</text>
      </g>

      {/* radius callout */}
      <rect x="507" y="344" width="5" height="5" fill="#a89078" stroke="#776" />
      <path d="M512 355L520 352L521 372L512 384Z" fill="#e8fbff" stroke="#28d4e8" strokeDasharray="3 1" />
      <path d="M509 350L511 389" stroke="#222" strokeWidth="1.4" />
      <text transform="translate(513 356) rotate(84)" fontSize="10" fill="#111">R1</text>
      <text transform="translate(501 369) rotate(84)" fontSize="10" fill="#e82020">(~1:6)</text>
    </svg>
  );
}

function MethodButton({ name, active }: { name: GlyphName; active?: boolean }) {
  return (
    <button aria-label={name} className={clsx('flex size-[13px] items-center justify-center border', active ? 'border-[#c89628] bg-[#ffd76a]' : 'border-[#c4a890] bg-[#fdf3ea]')}>
      <Glyph name={name} className="size-[11px]" />
    </button>
  );
}

function PropertyPanel() {
  const tabs: { icon: GlyphName; text: string }[] = [
    { icon: 'fillet', text: 'Скругление' },
    { icon: 'params', text: 'Параметры' },
    { icon: 'variable', text: 'Переменный радиус' },
    { icon: 'stopRound', text: 'Остановка скругления' },
    { icon: 'props', text: 'Свойства' },
  ];
  return (
    <section className="flex border-t border-[#c3c6ca] bg-[#dfe2e6] pt-px text-[7px] leading-[12px] text-[#222]">
      <div className="mt-1 grid w-[34px] shrink-0 grid-cols-2 content-start gap-y-px border-t border-[#b4b7bb] bg-[#eceef0]">
        <button aria-label="Создать объект" className="ml-px flex h-[14px] items-center justify-center bg-white outline-2 -outline-offset-1 outline-red-600">
          <Glyph name="enter" />
        </button>
        <button aria-label="Прервать команду" className="flex items-center justify-center">
          <svg viewBox="0 0 16 16" className="size-3">
            <path d="M5 2h6l4 4v4l-4 4H5l-4-4V6z" fill="#e81c1c" />
            <text x="8" y="10" fontSize="6" fontWeight="700" textAnchor="middle" fill="#fff">STOP</text>
          </svg>
        </button>
        <button aria-label="Автосоздание" className="flex h-[14px] items-center justify-center"><Glyph name="fourWay" className="size-[11px]" /></button>
        <button aria-label="Справка" className="flex h-[14px] items-center justify-center"><Glyph name="helpBox" className="size-[10px]" /></button>
      </div>
      <div className="min-w-0 flex-1">
        <div className="mt-1 flex h-[23px] items-center border-y border-l border-[#9a9da1] bg-gradient-to-b from-white to-[#e8eaec] pl-3">
          <span className="w-[16px] first-letter:underline">Тип</span>
          <div className="flex gap-[2px]">
            <MethodButton name="roundEdge" active />
            <MethodButton name="chamferEdge" />
          </div>
          <span className="mx-[2px] h-3 w-px bg-[#9a9da1]" />
          <span className="w-[27px]">Спосо<u>б</u></span>
          <div className="flex gap-[2px]">
            <MethodButton name="arcA" active />
            <MethodButton name="arcB" />
            <MethodButton name="arcC" />
            <MethodButton name="chord" />
          </div>
          <div className="flex h-[18px] items-center border-2 border-red-600 bg-[#f1f2f3] px-px">
            <label htmlFor="radius" className="w-[28px] bg-[#ffd76a] pl-px first-letter:underline">Радиус</label>
            <input id="radius" defaultValue="1.0" className="h-3 w-5 border border-[#c3c6ca] bg-white pl-[2px]" />
            <span className="flex h-3 w-3 flex-col items-center justify-between border border-[#b4b7bb] bg-white py-px">
              <button aria-label="Больше" className="h-0 w-0 border-x-2 border-b-3 border-x-transparent border-b-[#222]" />
              <button aria-label="Меньше" className="h-0 w-0 border-x-2 border-t-3 border-x-transparent border-t-[#222]" />
            </span>
            <button className="ml-[2px] h-3 w-[11px] border border-[#b4b7bb] bg-[#eceef0] text-[9px] leading-[10px] font-bold">±</button>
          </div>
          <button className="ml-[2px] h-3.5 w-11 border border-[#a4a7ab] bg-[#f6f7f8] pl-[2px] text-left leading-[11px]">Грани (0)</button>
          <button className="ml-[2px] h-3.5 w-11 border border-[#a4a7ab] bg-[#f6f7f8] pl-[2px] text-left leading-[11px]">Ребра (4)</button>
        </div>
        <div role="tablist" className="flex h-[17px] items-start gap-px pl-px">
          {tabs.map((tab, i) => (
            <button
              key={tab.text}
              role="tab"
              aria-selected={i === 0}
              className={clsx('flex h-[15px] items-center px-[2px] whitespace-nowrap', i === 0 && 'border-x border-b border-[#b4b7bb] bg-white')}
            >
              <Glyph name={tab.icon} className="size-[12px]" />
              {tab.text}
            </button>
          ))}
        </div>
      </div>
    </section>
  );
}

const marks = [25, 315, 607].flatMap((x) => [96, 215, 334, 453].map((y) => ({ x, y })));

function Watermark() {
  return (
    <svg className="pointer-events-none absolute inset-0 h-full w-full" aria-hidden="true">
      <g fill="#4a55b8" fillOpacity="0.3" fontFamily="'Liberation Serif', serif" fontStyle="italic" fontWeight="700" fontSize="23">
        {marks.map(({ x, y }) => (
          <text key={`${x}-${y}`} transform={`translate(${x} ${y}) rotate(-19)`}>Soringpcrepair.Com</text>
        ))}
      </g>
    </svg>
  );
}

export default function App() {
  return (
    <div className="relative flex min-h-screen flex-col overflow-hidden bg-[#e1e5e9] font-['Noto_Sans','Open_Sans',sans-serif]">
      <Header />
      <main className="flex flex-1 border-t border-[#a9adb2]">
        <Rail />
        <div className="flex min-w-0 flex-1 flex-col">
          <div className="flex h-4 items-end bg-gradient-to-b from-[#e9ecef] to-white pl-[2px]">
            <div className="flex h-[15px] w-[130px] items-center border-t border-r border-[#8fa3c0] bg-gradient-to-b from-[#f5f9ff] to-[#c6d6ee] pr-[3px] pl-[14px] text-[8px] leading-[12px] text-[#111] [clip-path:polygon(12px_0,100%_0,100%_100%,0_100%)]">
              <Glyph name="part" className="size-[11px]" />
              <span className="ml-[6px] font-semibold whitespace-nowrap">Деталь БЕЗ ИМЕНИ1</span>
              <button aria-label="Закрыть вкладку" className="ml-auto"><Glyph name="close" className="size-[8px]" /></button>
            </div>
            <button aria-label="Список вкладок" className="mr-1 mb-1.5 ml-auto"><Arrow /></button>
          </div>
          <div className="flex min-h-0 flex-1">
            <TreePanel />
            <Viewport />
          </div>
          <PropertyPanel />
        </div>
      </main>
      <footer className="h-3 border-t border-[#a4a7ab] bg-gradient-to-b from-[#d9dce0] to-[#bfc3c8] pl-1 text-[7px] leading-[11px] text-[#333]">
        Укажите ребра или грани и радиус скругления
      </footer>
      <Watermark />
    </div>
  );
}
